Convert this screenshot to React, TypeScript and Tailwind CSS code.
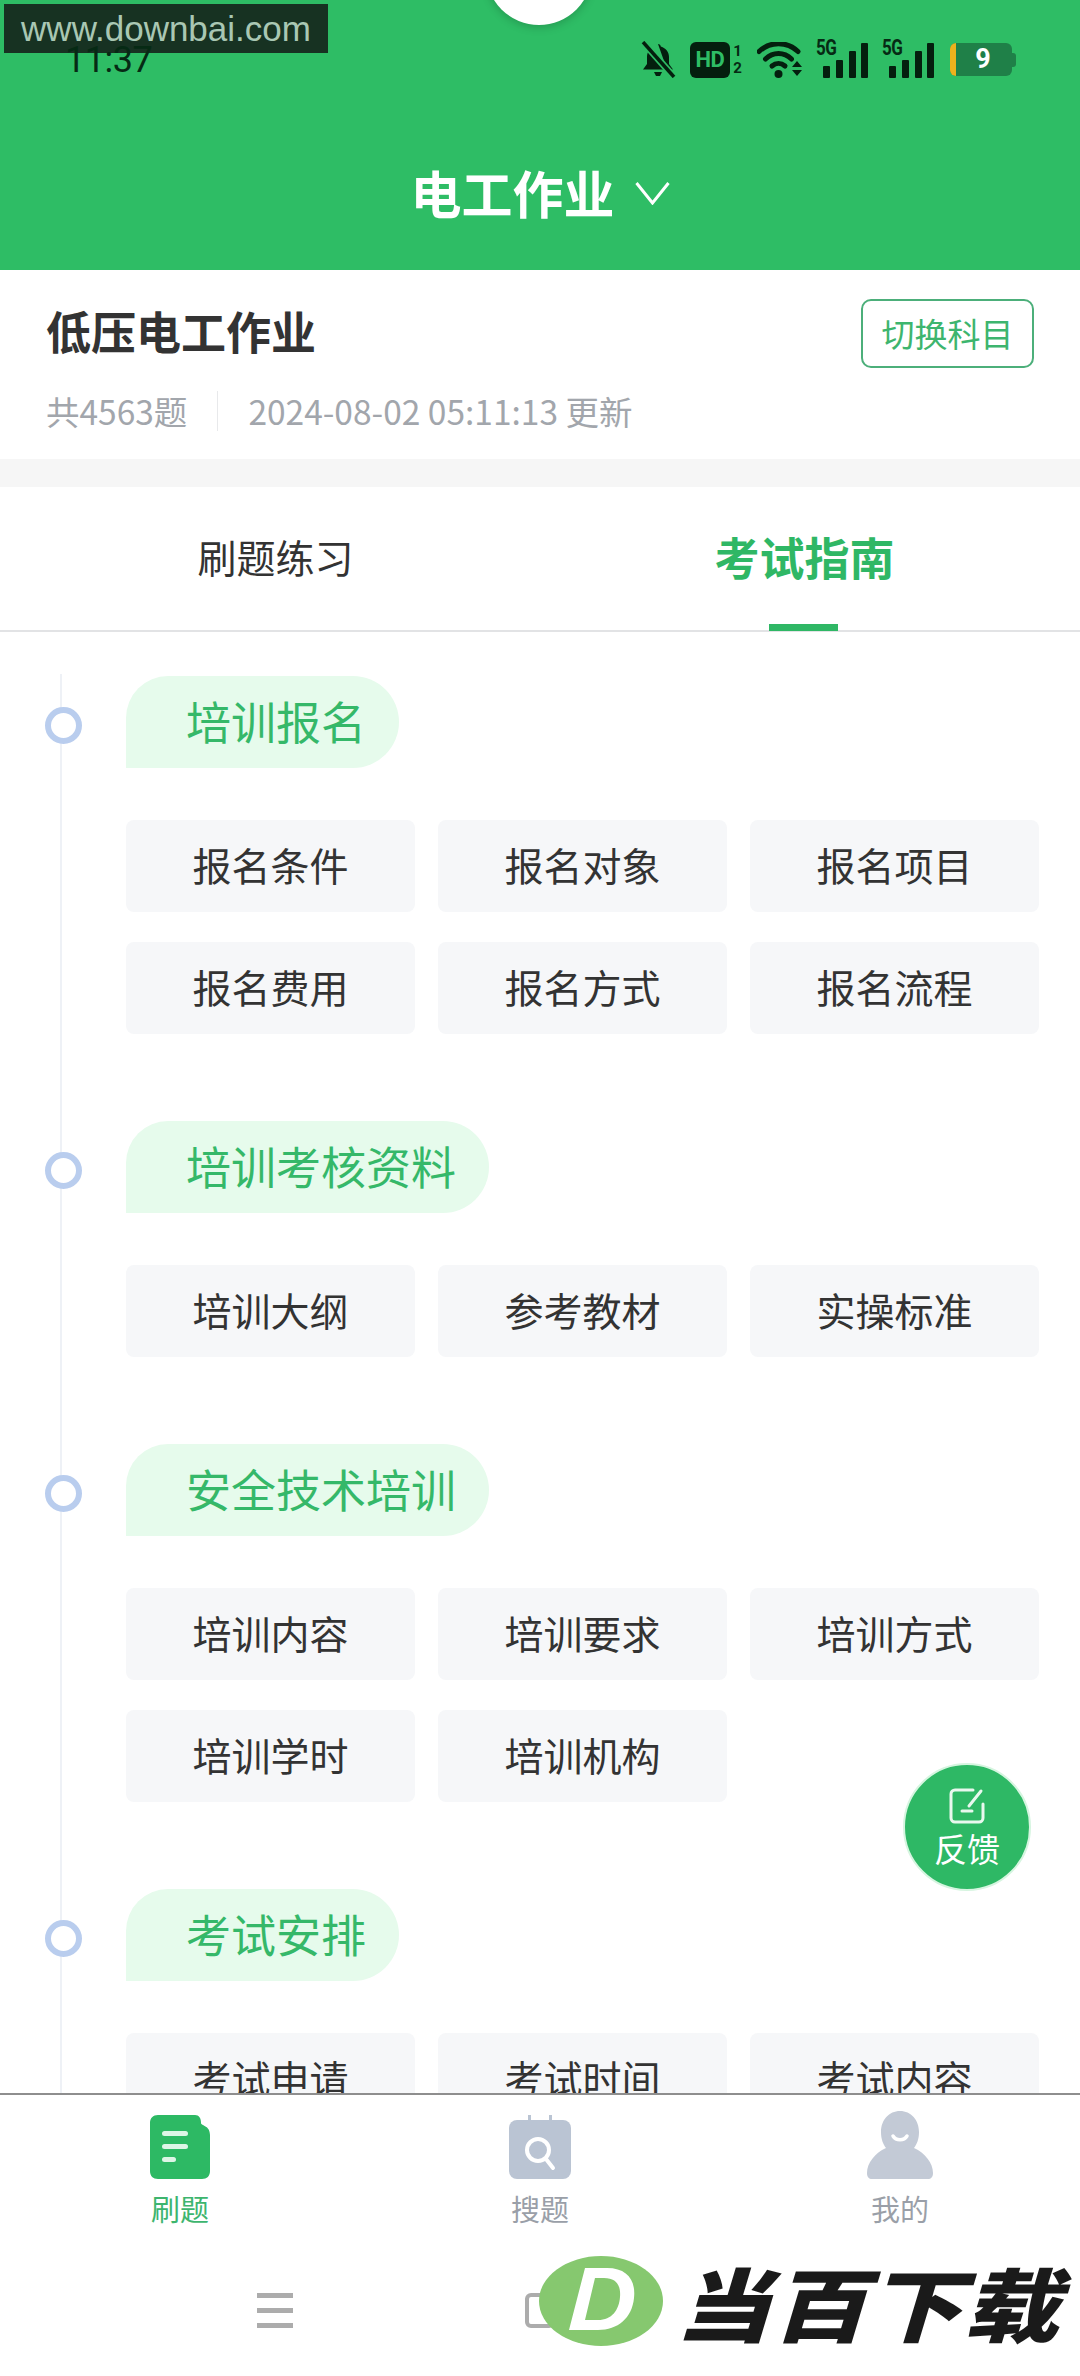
import React from "react";

const cjk = "font-['Noto_Sans_CJK_SC','Noto_Sans',sans-serif]";

const sections: { title: string; items: string[] }[] = [
  { title: "培训报名", items: ["报名条件", "报名对象", "报名项目", "报名费用", "报名方式", "报名流程"] },
  { title: "培训考核资料", items: ["培训大纲", "参考教材", "实操标准"] },
  { title: "安全技术培训", items: ["培训内容", "培训要求", "培训方式", "培训学时", "培训机构"] },
  { title: "考试安排", items: ["考试申请", "考试时间", "考试内容"] },
];

function Signal() {
  return (
    <div className="relative w-[52px] h-[36px]">
      <span className="absolute left-0 top-[-2px] font-['Roboto',sans-serif] font-bold text-[17px] leading-[17px] tracking-[-0.5px] text-[#062a14] scale-y-125">5G</span>
      <svg className="absolute left-0 top-0" width="52" height="36" viewBox="0 0 52 36" fill="#041f0e">
        <rect x="7" y="24" width="7" height="12" rx="1" />
        <rect x="20" y="18" width="7" height="18" rx="1" />
        <rect x="33" y="9" width="7" height="27" rx="1" />
        <rect x="45" y="1" width="7" height="35" rx="1" />
      </svg>
    </div>
  );
}

function StatusIcons() {
  return (
    <div className="flex items-center">
      <svg width="36" height="37" viewBox="0 0 36 37" fill="#041f0e">
        <path d="M18 3c1.600 0 2.600 1 2.800 2.400C26 7 29 11 29 16v7l4 5.500H3L7 23v-7c0-2.300.6-4.400 1.700-6.200L27 28.500" />
        <path d="M14 31h8l-2 4h-4z" />
        <path d="M3 1l31 35" stroke="#2EBD65" strokeWidth="7" />
        <path d="M3 1l31 35" stroke="#041f0e" strokeWidth="3.500" />
      </svg>
      <div className="ml-[14px] w-[40px] h-[36px] rounded-[6px] bg-[#041f0e] flex items-center justify-center font-['Roboto',sans-serif] font-bold text-[#2EBD65] text-[22px] leading-none tracking-[-0.5px]">HD</div>
      <div className="ml-[3px] w-[9px] flex flex-col items-center font-['Roboto',sans-serif] font-bold text-[#062a14] text-[15px] leading-[17px]">
        <span>1</span>
        <span>2</span>
      </div>
      <svg className="ml-[15px]" width="46" height="36" viewBox="0 0 46 36" fill="none">
        <path d="M2 9.500C13 -1 30 -1 41 9.500" stroke="#041f0e" strokeWidth="5" strokeLinecap="round" />
        <path d="M8.500 17C16 9.500 27 9.500 34.500 17" stroke="#041f0e" strokeWidth="5" strokeLinecap="round" />
        <path d="M15 24C19 20.500 24 20.500 28 24" stroke="#041f0e" strokeWidth="5" strokeLinecap="round" />
        <circle cx="21.500" cy="32" r="4" fill="#041f0e" />
        <path d="M35 25l5-6 5 6zM35 28h10l-5 6z" fill="#041f0e" />
      </svg>
      <div className="ml-[13px]"><Signal /></div>
      <div className="ml-[14px]"><Signal /></div>
      <div className="ml-[16px] relative w-[66px] h-[33px] flex items-center">
        <div className="w-[62px] h-[33px] rounded-[6px] bg-[#1F8048] overflow-hidden flex">
          <div className="w-[6px] h-full bg-[#EDB21D]" />
          <div className="flex-1 flex items-center justify-center font-['Roboto',sans-serif] font-bold text-white text-[27px] leading-none pr-[2px]">9</div>
        </div>
        <div className="w-[4px] h-[14px] bg-[#1F8048] rounded-r-[3px]" />
      </div>
    </div>
  );
}

function Section({ title, items }: { title: string; items: string[] }) {
  return (
    <section className="relative pl-[126px] pr-[41px] mb-[87px]">
      <span className="absolute left-[45px] top-[31px] w-[37px] h-[37px] rounded-full border-[6px] border-[#B9CDEE] bg-white" />
      <div className="inline-flex items-center h-[92px] pl-[60px] pr-[33px] bg-[#E6FBEC] rounded-tl-[42px] rounded-tr-[46px] rounded-br-[46px] text-[#35B869] text-[45px] leading-none pb-[4px]">
        {title}
      </div>
      <div className="mt-[52px] grid grid-cols-3 gap-x-[23px] gap-y-[30px]">
        {items.map((t) => (
          <div key={t} className="h-[92px] rounded-[8px] bg-[#F6F7F9] flex items-center justify-center text-[#333333] text-[39px] leading-none pb-[3px]">
            {t}
          </div>
        ))}
      </div>
    </section>
  );
}

function NavIcons({ kind }: { kind: "a" | "b" | "c" }) {
  if (kind === "a")
    return (
      <svg width="60" height="64" viewBox="0 0 60 64">
        <path d="M8 0h37c4 0 6 3 6 8 0 3 9 2 9 12v36c0 5-3 8-8 8H8c-5 0-8-3-8-8V8c0-5 3-8 8-8z" fill="#2DB964" />
        <rect x="12" y="16" width="26" height="5" rx="2.500" fill="#DDF5E6" />
        <rect x="12" y="29" width="26" height="5" rx="2.500" fill="#DDF5E6" />
        <rect x="12" y="42" width="14" height="5" rx="2.500" fill="#DDF5E6" />
      </svg>
    );
  if (kind === "b")
    return (
      <svg width="62" height="64" viewBox="0 0 62 64">
        <rect x="0" y="5" width="62" height="59" rx="8" fill="#BAC4D3" />
        <rect x="19" y="0" width="3" height="8" fill="#BAC4D3" />
        <rect x="40" y="0" width="3" height="8" fill="#BAC4D3" />
        <circle cx="29" cy="35" r="11" fill="none" stroke="#fff" strokeWidth="4" />
        <path d="M37 44l7 9" stroke="#fff" strokeWidth="4" strokeLinecap="round" />
      </svg>
    );
  return (
    <svg width="66" height="68" viewBox="0 0 66 68">
      <path d="M33 0c11 0 19 9 19 21 0 7-2 12-5 16 11 5 19 15 19 25 0 4-2 6-5 6H5c-3 0-5-2-5-6 0-10 8-20 19-25-3-4-5-9-5-16C14 9 22 0 33 0z" fill="#C3CAD6" />
      <path d="M26 25c3 5 11 5 14 0" stroke="#fff" strokeWidth="3.500" fill="none" strokeLinecap="round" />
    </svg>
  );
}

function NavItem({ kind, label, active }: { kind: "a" | "b" | "c"; label: string; active?: boolean }) {
  return (
    <div className="w-[361px] flex flex-col items-center">
      <div className="h-[68px] flex items-end"><NavIcons kind={kind} /></div>
      <span className={`mt-[9px] text-[29px] leading-[40px] ${active ? "text-[#3DB56E]" : "text-[#9A9FA8]"}`}>{label}</span>
    </div>
  );
}

export default function App() {
  return (
    <div className={`relative w-[1080px] h-[2376px] overflow-hidden bg-white flex flex-col ${cjk}`}>
      <header className="h-[270px] shrink-0 bg-[#2EBD65] flex flex-col">
        <div className="h-[41px]" />
        <div className="h-[37px] flex items-center justify-between pl-[65px] pr-[64px]">
          <span className="relative z-10 font-['Roboto',sans-serif] text-[36px] leading-none tracking-[-0.5px] text-[#062a14]">11:37</span>
          <StatusIcons />
        </div>
        <div className="mt-[76px] flex items-center justify-center gap-[20px]">
          <span className="text-white text-[51px] leading-[76px] font-bold">电工作业</span>
          <svg width="35" height="24" viewBox="0 0 35 24" fill="none" className="mt-[2px]">
            <path d="M1.500 2L17.500 22L33.500 2" stroke="#fff" strokeWidth="3" />
          </svg>
        </div>
      </header>

      <div className="h-[189px] shrink-0 pl-[46px] pr-[46px] flex justify-between">
        <div className="flex flex-col">
          <div className="mt-[28px] text-[45px] leading-[66px] font-bold text-[#333333]">低压电工作业</div>
          <div className="mt-[23px] flex items-center text-[33.500px] leading-[48px] text-[#A2A6AC]">
            <span>共4563题</span>
            <span className="ml-[30px] mr-[30px] w-[1px] h-[40px] bg-[#E8E9EB]" />
            <span>2024-08-02 05:11:13 更新</span>
          </div>
        </div>
        <div className="mt-[29px] ml-[2px] w-[173px] h-[69px] rounded-[10px] border-2 border-[#4CAF7A] flex items-center justify-center text-[#3DB56E] text-[33px] leading-none">切换科目</div>
      </div>
      <div className="h-[28px] shrink-0 bg-[#F6F6F6]" />

      <div className="h-[145px] shrink-0 px-[11px] flex border-b-2 border-[#E2E3E5]">
        <div className="flex-1 flex items-center justify-center text-[#333333] text-[39px] leading-none pb-[4px]">刷题练习</div>
        <div className="relative flex-1 flex items-center justify-center text-[#2FB765] text-[45px] font-bold leading-none pb-[4px]">
          考试指南
          <span className="absolute bottom-[-1px] left-[229px] w-[69px] h-[7px] bg-[#2FB765]" />
        </div>
      </div>

      <main className="relative flex-1 min-h-0 overflow-hidden pt-[44px]">
        <span className="absolute left-[60px] top-[42px] bottom-0 w-[2px] bg-[#EEF1F6]" />
        {sections.map((s) => (
          <Section key={s.title} title={s.title} items={s.items} />
        ))}
      </main>

      <nav className="h-[283px] shrink-0 bg-white border-t-2 border-[#8E8E8E]">
        <div className="flex pt-[16px]">
          <NavItem kind="a" label="刷题" active />
          <NavItem kind="b" label="搜题" />
          <NavItem kind="c" label="我的" />
        </div>
        <div className="mt-[65px] pl-[257px] flex items-center">
          <div className="w-[36px] flex flex-col gap-[10px]">
            <span className="h-[5px] bg-[#ACACAC]" />
            <span className="h-[5px] bg-[#ACACAC]" />
            <span className="h-[5px] bg-[#ACACAC]" />
          </div>
          <span className="ml-[232px] w-[30px] h-[35px] rounded-[6px] border-[4px] border-[#ACACAC]" />
        </div>
      </nav>

      {/* floating feedback button */}
      <div className="absolute left-[903px] top-[1763px] w-[128px] h-[128px] rounded-full bg-[#2EB865] border-2 border-[#D6F5E0] flex flex-col items-center justify-center text-white">
        <svg width="38" height="38" viewBox="0 0 38 38" fill="none" stroke="#E8F8EE" strokeWidth="3" strokeLinecap="round">
          <path d="M25 3H7a4 4 0 0 0-4 4v24a4 4 0 0 0 4 4h24a4 4 0 0 0 4-4V17" />
          <path d="M21 19L33 4" />
          <path d="M14 24h10" />
        </svg>
        <span className="mt-[4px] text-[33px] leading-[38px]">反馈</span>
      </div>

      {/* overlays baked into the capture */}
      <div className="absolute left-[486px] top-[-90px] w-[106px] h-[115px] rounded-full bg-white shadow-[0_2px_10px_rgba(0,0,0,0.2)]" />
      <div className="absolute left-[4px] top-[4px] w-[324px] h-[49px] bg-[#173222] flex items-center justify-center font-['Liberation_Sans',sans-serif] text-[#A9C7B3] text-[35px] leading-none">www.downbai.com</div>
      <div className="absolute left-[538px] top-[2255px] flex items-center">
        <svg width="126" height="92" viewBox="0 0 124 92">
          <ellipse cx="62" cy="46" rx="62" ry="45" fill="#86C86F" />
          <path fillRule="evenodd" d="M46 13h22c20 0 29 12 27 30-2 20-16 32-36 32H30zM56 23l-10 42h13c14 0 21-10 22-23 1-12-4-19-16-19z" fill="#fff" />
        </svg>
        <span className="ml-[11px] text-[80px] leading-[92px] font-black italic text-[#1A1A1A] whitespace-nowrap scale-x-[1.2] origin-left">当百下载</span>
      </div>
    </div>
  );
}
